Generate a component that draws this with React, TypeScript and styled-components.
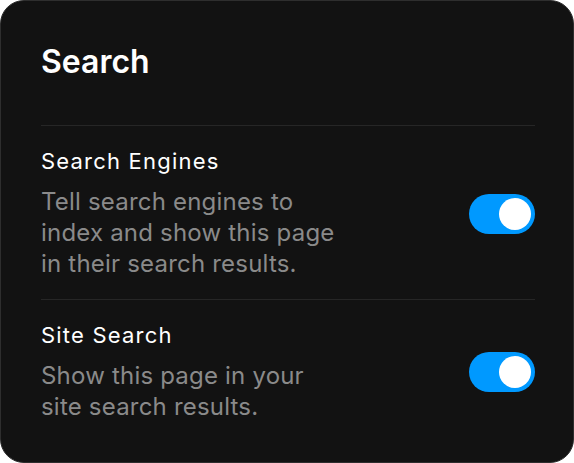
import styled, { createGlobalStyle } from "styled-components";

const GlobalStyle = createGlobalStyle`
    html, body {
        margin: 0;
        padding: 0;
        background: #ffffff;
    }
    * {
        box-sizing: border-box;
    }
`

const Card = styled.div`
    width: 574px;
    height: 463px;
    background: #121212;
    border: 1px solid #2e2e2e;
    border-radius: 24px;
    padding: 41px 38px 0 40px;
    font-family: Inter, "Noto Sans", sans-serif;
    overflow: hidden;
`

const Title = styled.h1`
    margin: 0 0 44px 0;
    font-size: 32px;
    font-weight: 600;
    line-height: 39px;
    color: #ffffff;
`

const Row = styled.div`
    display: flex;
    align-items: center;
    justify-content: space-between;
    border-top: 1px solid #262626;
    padding: 22px 0 20px 0;
`

const Texts = styled.div`
    display: flex;
    flex-direction: column;
    gap: 11px;
    width: 300px;
`

const Label = styled.div`
    font-size: 22px;
    font-weight: 400;
    line-height: 27px;
    letter-spacing: 1.2px;
    color: #ffffff;
`

const Description = styled.div`
    font-size: 24px;
    font-weight: 400;
    line-height: 31px;
    letter-spacing: 0.2px;
    color: #8a8a8a;
`

const Track = styled.button<{ on: boolean }>`
    position: relative;
    flex: none;
    width: 66px;
    height: 40px;
    border: none;
    border-radius: 20px;
    padding: 0;
    background: ${props => props.on ? '#0099ff' : '#3a3a3a'};
    cursor: pointer;
`

const Knob = styled.span<{ on: boolean }>`
    position: absolute;
    top: 4px;
    left: ${props => props.on ? '30px' : '4px'};
    width: 32px;
    height: 32px;
    border-radius: 50%;
    background: #ffffff;
`

const settings = [
    {
        label: 'Search Engines',
        description: 'Tell search engines to index and show this page in their search results.',
    },
    {
        label: 'Site Search',
        description: 'Show this page in your site search results.',
    },
]

const App = () => {
    return (
        <>
            <GlobalStyle />
            <Card>
                <Title>Search</Title>
                {settings.map(item => (
                    <Row key={item.label}>
                        <Texts>
                            <Label>{item.label}</Label>
                            <Description>{item.description}</Description>
                        </Texts>
                        <Track on={true}>
                            <Knob on={true} />
                        </Track>
                    </Row>
                ))}
            </Card>
        </>
    )
}

export default App;
